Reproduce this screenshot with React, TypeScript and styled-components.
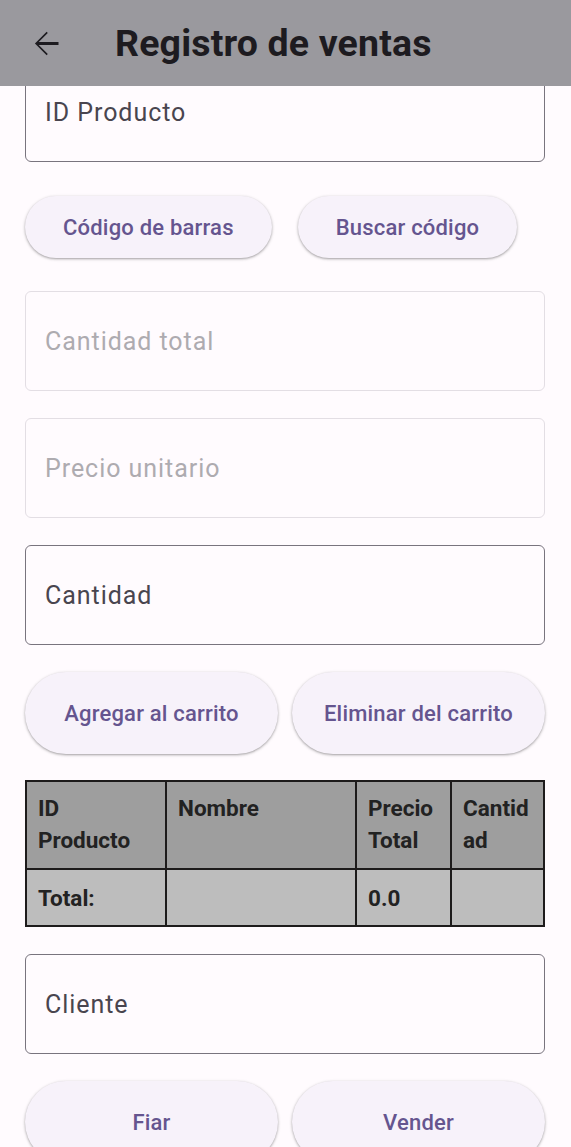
import React from "react";
import styled, { createGlobalStyle } from "styled-components";

const Global = createGlobalStyle`
  html, body { margin: 0; padding: 0; background: #fffbfe; }
  body { font-family: Roboto, "Noto Sans", sans-serif; -webkit-font-smoothing: antialiased; }
  * { box-sizing: border-box; }
`;

const Screen = styled.div`
  width: 571px;
  height: 1147px;
  display: flex;
  flex-direction: column;
  overflow: hidden;
  background: #fffbfe;
`;

const AppBar = styled.header`
  flex: 0 0 86px;
  height: 86px;
  background: #9a999e;
  display: flex;
  align-items: center;
  padding-left: 26px;
  position: relative;
  z-index: 2;
`;

const BackIcon = styled.svg`
  width: 39px;
  height: 39px;
  fill: #1d1b20;
  flex: none;
`;

const Title = styled.h1`
  margin: 0 0 0 50px;
  font-size: 37.5px;
  font-weight: 700;
  color: #1d1b20;
  letter-spacing: 0.15px;
`;

const Scroll = styled.main`
  flex: 1;
  overflow: hidden;
`;

const Content = styled.div`
  margin-top: -24px;
  padding: 0 26px 0 25px;
  display: flex;
  flex-direction: column;
`;

const Field = styled.div<{ $disabled?: boolean; $mt?: number }>`
  height: 100px;
  margin-top: ${(p) => p.$mt ?? 27}px;
  border: 1.5px solid ${(p) => (p.$disabled ? "#e3dee4" : "#79747e")};
  border-radius: 6px;
  display: flex;
  align-items: center;
  padding-left: 19px;
  font-size: 25px;
  letter-spacing: 0.95px;
  color: ${(p) => (p.$disabled ? "#aeabb0" : "#49454f")};
`;

const ButtonRow = styled.div<{ $mt: number; $expand?: boolean }>`
  margin-top: ${(p) => p.$mt}px;
  display: flex;
  gap: ${(p) => (p.$expand ? 14 : 26)}px;
`;

const Button = styled.button<{ $tall?: boolean; $expand?: boolean }>`
  flex: ${(p) => (p.$expand ? "1 1 0" : "none")};
  height: ${(p) => (p.$tall ? 82 : 62)}px;
  padding: ${(p) => (p.$expand ? "0 8px" : "0 38px")};
  white-space: nowrap;
  border: none;
  border-radius: 999px;
  background: #f7f2fa;
  color: #65558f;
  font-family: Roboto, sans-serif;
  font-size: 22px;
  font-weight: 500;
  letter-spacing: 0.2px;
  box-shadow: 0 1px 2px rgba(0, 0, 0, 0.25), 0 1px 3px 1px rgba(0, 0, 0, 0.1);
`;

const Table = styled.div`
  margin-top: 26px;
  display: grid;
  grid-template-columns: 138px 188px 93px 1fr;
  border: 2px solid #1d1b1b;
  background: #1d1b1b;
  gap: 2px;
`;

const Cell = styled.div<{ $head?: boolean }>`
  background: ${(p) => (p.$head ? "#9e9e9e" : "#bdbdbd")};
  min-height: ${(p) => (p.$head ? 86 : 55)}px;
  padding: ${(p) => (p.$head ? "10px 12px 0 11px" : "12px 12px 0 11px")};
  font-size: 22.5px;
  font-weight: 700;
  line-height: 32px;
  color: #222;
  overflow-wrap: anywhere;
`;

const ArrowBack = () => (
  <BackIcon viewBox="0 0 24 24">
    <path d="M20 11.1H7.83l5.59-5.59L12.7 4.8 5.5 12l7.2 7.2.72-.71-5.59-5.59H20z" />
  </BackIcon>
);

export default function App() {
  return (
    <>
      <Global />
      <Screen>
        <AppBar>
          <ArrowBack />
          <Title>Registro de ventas</Title>
        </AppBar>
        <Scroll>
          <Content>
            <Field $mt={0}>ID Producto</Field>
            <ButtonRow $mt={34}>
              <Button>Código de barras</Button>
              <Button>Buscar código</Button>
            </ButtonRow>
            <Field $mt={33} $disabled>Cantidad total</Field>
            <Field $disabled>Precio unitario</Field>
            <Field>Cantidad</Field>
            <ButtonRow $mt={27} $expand>
              <Button $tall $expand>Agregar al carrito</Button>
              <Button $tall $expand>Eliminar del carrito</Button>
            </ButtonRow>
            <Table>
              <Cell $head>ID Producto</Cell>
              <Cell $head>Nombre</Cell>
              <Cell $head>Precio Total</Cell>
              <Cell $head>Cantidad</Cell>
              <Cell>Total:</Cell>
              <Cell></Cell>
              <Cell>0.0</Cell>
              <Cell></Cell>
            </Table>
            <Field>Cliente</Field>
            <ButtonRow $mt={27} $expand>
              <Button $tall $expand>Fiar</Button>
              <Button $tall $expand>Vender</Button>
            </ButtonRow>
          </Content>
        </Scroll>
      </Screen>
    </>
  );
}
